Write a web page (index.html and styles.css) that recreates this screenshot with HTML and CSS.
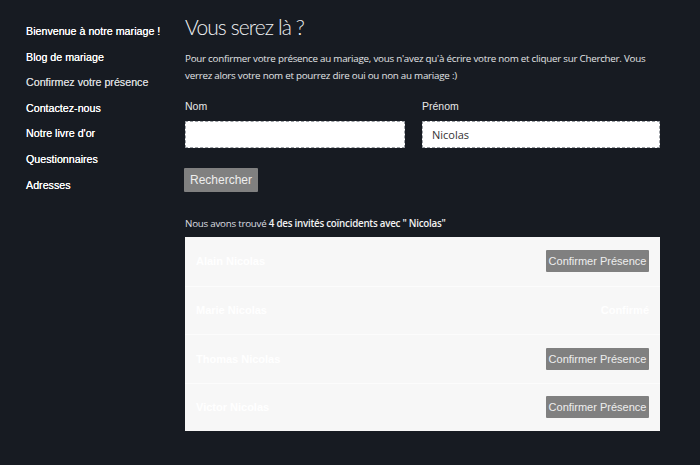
FILE: index.html
```html
<!DOCTYPE html>
<html lang="fr">
<head>
<meta charset="utf-8">
<link rel="stylesheet" href="styles.css">
</head>
<body>
<div class="page">
  <nav class="sidebar">
    <a href="#">Bienvenue à notre mariage !</a>
    <a href="#">Blog de mariage</a>
    <a href="#" class="active">Confirmez votre présence</a>
    <a href="#">Contactez-nous</a>
    <a href="#">Notre livre d'or</a>
    <a href="#">Questionnaires</a>
    <a href="#">Adresses</a>
  </nav>
  <main class="main">
    <h1 class="title">Vous serez là ?</h1>
    <p class="intro">Pour confirmer votre présence au mariage, vous n'avez qu'à écrire votre nom et cliquer sur Chercher. Vous verrez alors votre nom et pourrez dire oui ou non au mariage :)</p>
    <form class="form">
      <div class="field">
        <label class="label">Nom</label>
        <input class="input" type="text" value="">
      </div>
      <div class="field">
        <label class="label">Prénom</label>
        <input class="input" type="text" value="Nicolas">
      </div>
    </form>
    <button class="btn search">Rechercher</button>
    <p class="found">Nous avons trouvé <strong>4 des invités coïncidents avec " Nicolas"</strong></p>
    <div class="results">
      <div class="row"><span class="name">Alain Nicolas</span><button class="btn small">Confirmer Présence</button></div>
      <div class="row"><span class="name">Marie Nicolas</span><span class="status">Confirmé</span></div>
      <div class="row"><span class="name">Thomas Nicolas</span><button class="btn small">Confirmer Présence</button></div>
      <div class="row"><span class="name">Victor Nicolas</span><button class="btn small">Confirmer Présence</button></div>
    </div>
  </main>
</div>
</body>
</html>
```
FILE: styles.css
```css
html, body {
  margin: 0;
  padding: 0;
  background: #171b22;
  height: 100%;
}
.page {
  display: flex;
  min-height: 465px;
}
.sidebar {
  width: 185px;
  flex: none;
  display: flex;
  flex-direction: column;
  padding: 24px 0 0 26px;
  box-sizing: border-box;
}
.sidebar a {
  font-family: "Liberation Sans", Arial, sans-serif;
  font-size: 10.7px;
  color: #ffffff;
  text-decoration: none;
  line-height: 15px;
  margin-bottom: 10.6px;
  text-shadow: 0 0 0.3px #ffffff;
}
.sidebar a.active {
  color: #d4d6d8;
  text-shadow: 0 0 0.3px #d4d6d8;
}
.main {
  width: 475px;
  padding-top: 14px;
}
.title {
  margin: 0;
  font-family: Lato, sans-serif;
  font-weight: 300;
  font-size: 21px;
  line-height: 26px;
  color: #eef0f2;
  letter-spacing: -0.9px;
}
.intro {
  margin: 10px 0 0;
  font-family: "Open Sans", sans-serif;
  font-size: 9.8px;
  letter-spacing: -0.25px;
  line-height: 17px;
  color: #e2e4e6;
  width: 475px;
}
.form {
  display: grid;
  grid-template-columns: 220px 238px;
  column-gap: 17px;
  margin-top: 16px;
}
.field {
  display: flex;
  flex-direction: column;
}
.label {
  font-family: "Liberation Sans", Arial, sans-serif;
  font-size: 10.5px;
  color: #e8e8e8;
  line-height: 13px;
  margin-bottom: 8px;
}
.input {
  height: 27px;
  box-sizing: border-box;
  border: 1px dashed #9a9ea3;
  background: #ffffff;
  padding: 0 9px;
  font-family: "Open Sans", sans-serif;
  font-size: 11px;
  color: #333;
  outline: none;
  margin: 0;
}
.btn {
  background: #808080;
  color: #eeeeee;
  border: none;
  font-family: "Liberation Sans", Arial, sans-serif;
  cursor: pointer;
}
.search {
  display: block;
  margin-top: 20px;
  margin-left: -1px;
  width: 74px;
  height: 24px;
  font-size: 12px;
  padding: 0;
  border-radius: 1px;
}
.found {
  margin: 24px 0 0;
  font-family: "Open Sans", sans-serif;
  font-size: 9.8px;
  letter-spacing: -0.25px;
  line-height: 16px;
  color: #dcdee0;
}
.found strong {
  font-weight: 600;
  color: #f2f2f2;
}
.results {
  margin-top: 5px;
  background: #f7f7f7;
  display: flex;
  flex-direction: column;
}
.row {
  display: flex;
  align-items: center;
  justify-content: space-between;
  height: 48.5px;
  padding: 0 11px 0 11px;
  border-top: 1px solid #fcfcfc;
  box-sizing: border-box;
}
.row:first-child {
  border-top: none;
}
.name {
  font-family: "Liberation Sans", Arial, sans-serif;
  font-weight: bold;
  font-size: 11px;
  color: #ffffff;
}
.status {
  font-family: "Liberation Sans", Arial, sans-serif;
  font-weight: bold;
  font-size: 11px;
  color: #ffffff;
}
.btn.small {
  height: 22px;
  width: 103px;
  padding: 0;
  font-size: 11px;
  border-radius: 1px;
}
```
